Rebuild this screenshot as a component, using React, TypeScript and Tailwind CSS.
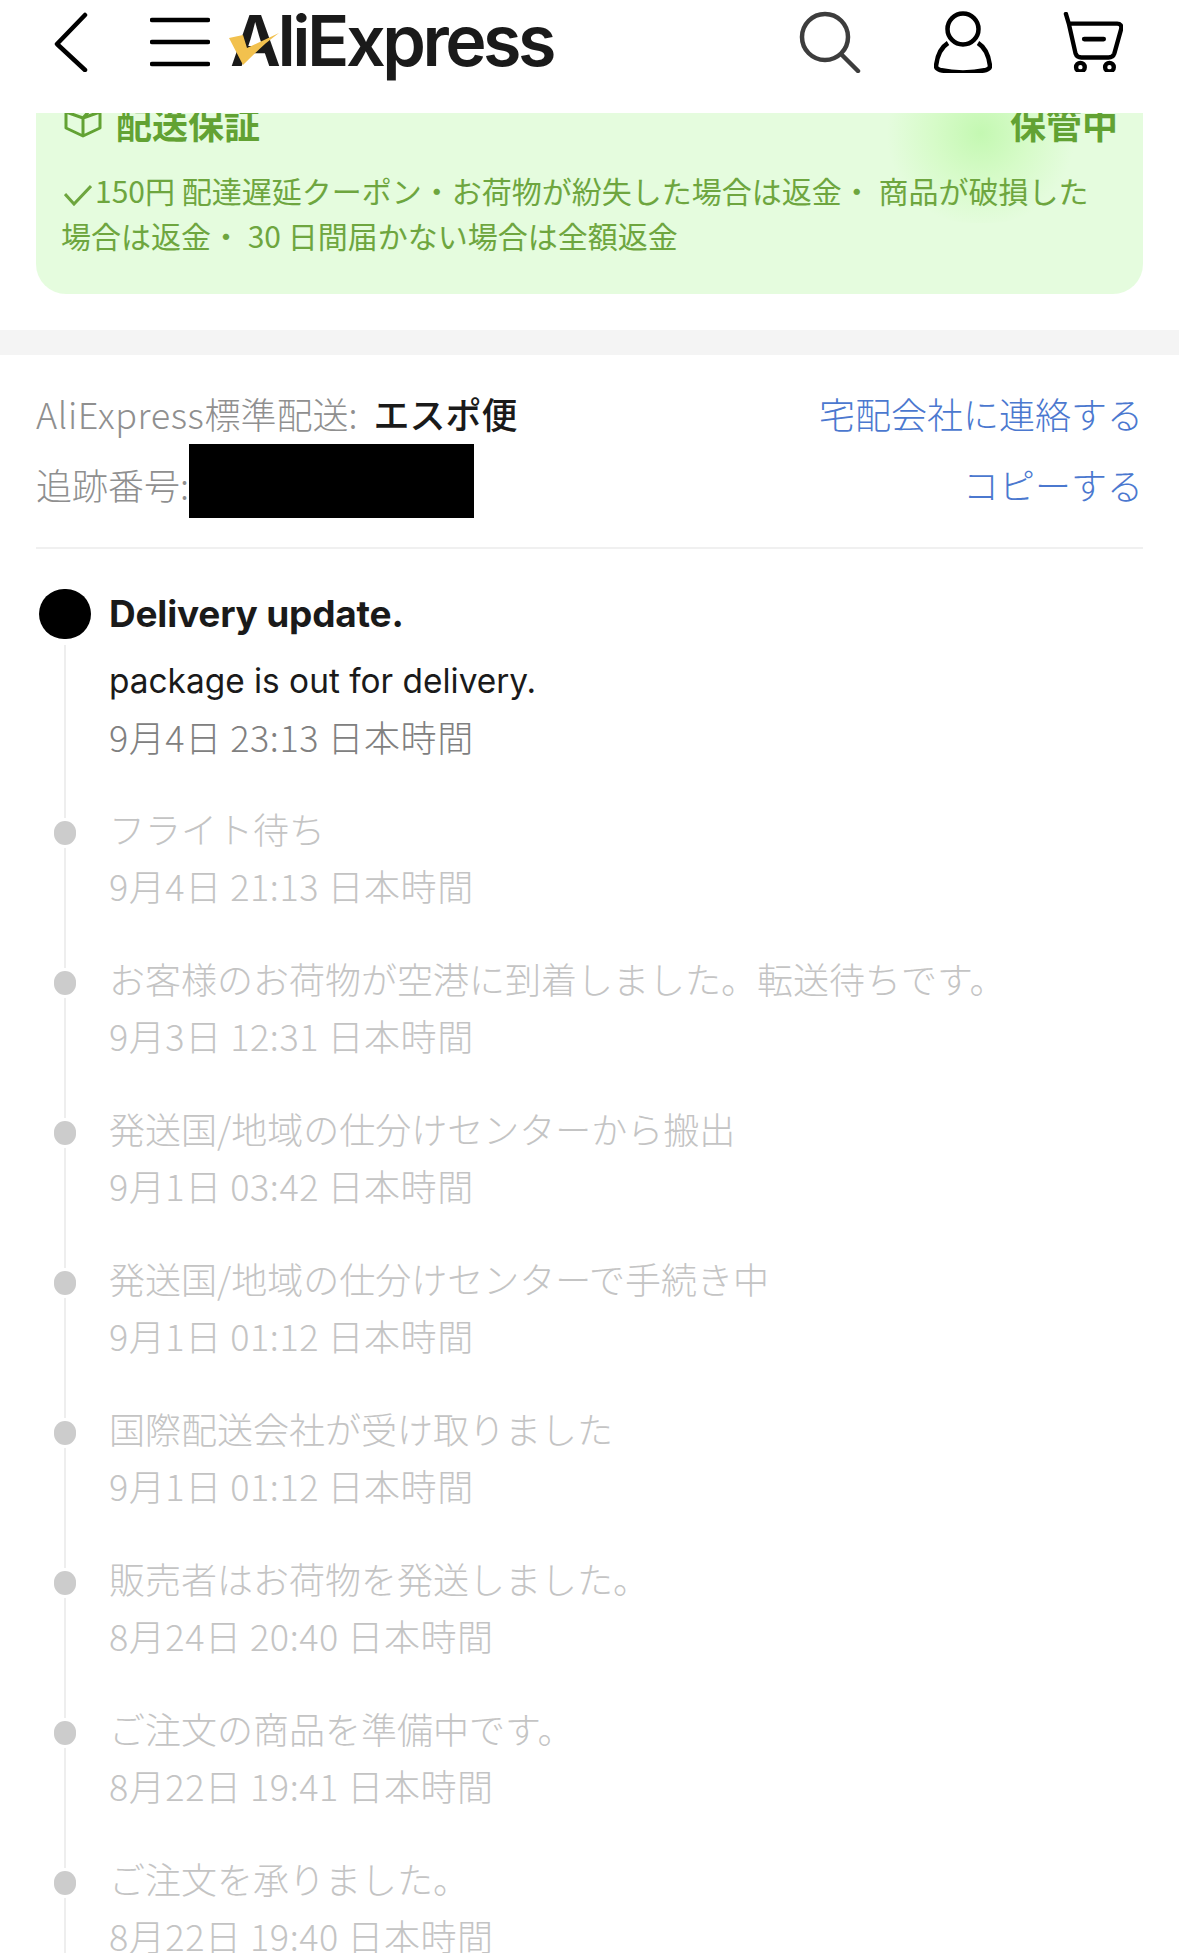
import React from "react";

const FONT = "font-['Noto_Sans_CJK_JP','Noto_Sans',sans-serif]";

const Header: React.FC = () => (
  <header className="relative z-10 h-[113px] bg-white flex items-start">
    <svg className="mt-[12px] ml-[52px] shrink-0" width="38" height="60" viewBox="0 0 38 60" fill="none" stroke="#000" strokeWidth="4.5" strokeLinecap="round" strokeLinejoin="round">
      <path d="M33 3 L5 32 L33 58" />
    </svg>
    <svg className="mt-[17px] ml-[60px] shrink-0" width="60" height="50" viewBox="0 0 60 50" fill="none" stroke="#000" strokeWidth="4.5" strokeLinecap="round">
      <path d="M2 3 H58 M2 25 H58 M2 47 H58" />
    </svg>
    <div className="relative ml-[20px] shrink-0 h-[90px]">
      <span className="block text-[70px] leading-[82px] font-semibold tracking-[-3.5px] text-[#1a1a1a] font-['Inter',sans-serif]">AliExpress</span>
      <svg className="absolute left-[-1px] top-[33px]" width="50" height="34" viewBox="0 0 50 34">
        <path d="M0 5 L14 2 L18 15 L50 0 C36 10 26 20 14 32 Z" fill="#f2c14e" />
      </svg>
    </div>
    <div className="ml-auto flex items-start">
      <svg className="mt-[11px]" width="62" height="62" viewBox="0 0 62 62" fill="none" stroke="#3d3d3d" strokeWidth="4.5" strokeLinecap="round">
        <circle cx="26" cy="26" r="23" />
        <path d="M43 44 L59 60" />
      </svg>
      <svg className="mt-[11px] ml-[73px]" width="58" height="62" viewBox="0 0 58 62" fill="none" stroke="#000" strokeWidth="4.5" strokeLinejoin="round">
        <circle cx="29" cy="18" r="15.5" />
        <path d="M14 32 C6 37 3 46 2 55 C2 57 3 58 6 59 C20 62 38 62 52 59 C55 58 56 57 56 55 C55 46 52 37 44 32" />
      </svg>
      <svg className="mt-[12px] ml-[71px] mr-[56px]" width="60" height="60" viewBox="0 0 62 62" fill="none" stroke="#000" strokeWidth="4.5" strokeLinecap="round" strokeLinejoin="round">
        <path d="M3 2 L6 12 L13 43 C14 46 16 47 19 47 H47 C50 47 52 46 53 43 L60 18 C61 14 59 12 56 12 H6" />
        <path d="M22 28 H42" strokeWidth="5" />
        <circle cx="18" cy="57" r="4.5" />
        <circle cx="48" cy="57" r="4.5" />
      </svg>
    </div>
  </header>
);

const GuaranteeCard: React.FC = () => (
  <div className="relative mx-[36px] mt-[-30px] mb-[36px] h-[211px]">
    <div className="absolute left-[810px] top-[-20px] w-[300px] h-[270px] rounded-full bg-[radial-gradient(circle,#ffffff_0%,#ffffff00_70%)] opacity-50" />
    <div className="relative h-full overflow-hidden rounded-b-[30px] bg-[#e4fcdc]/95 px-[25px] pt-[15px]">
      <div className="absolute left-[845px] top-[-40px] w-[200px] h-[180px] rounded-full bg-[radial-gradient(circle,#c4f8b2_0%,#d6fbc8_35%,#e4fcdc00_70%)]" />
      <div className="relative flex items-center justify-between h-[50px] text-[36px] font-bold text-[#62a233]">
        <div className="flex items-center">
          <svg className="ml-[2px] mr-[13px]" width="40" height="30" viewBox="0 0 38 30" fill="none" stroke="#62a233" strokeWidth="3" strokeLinejoin="round">
            <path d="M2 4 L19 10 L36 4 V20 L19 28 L2 20 Z M19 10 V28 M19 10 L26 2 L32 5" />
          </svg>
          <span>配送保証</span>
        </div>
        <span>保管中</span>
      </div>
      <p className="relative mt-[20px] text-[30px] leading-[44.5px] text-[#6ea63f] whitespace-nowrap">
        <svg className="inline-block mr-[3px] ml-[3px]" width="28" height="22" viewBox="0 0 28 22" fill="none" stroke="#6ea63f" strokeWidth="3">
          <path d="M1 10 L10 20 L27 2" />
        </svg>
        150円 配達遅延クーポン・お荷物が紛失した場合は返金・ 商品が破損した
        <br />
        場合は返金・ 30 日間届かない場合は全額返金
      </p>
    </div>
  </div>
);

const ShippingInfo: React.FC = () => (
  <section className="px-[36px] pt-[29px] text-[36px] font-light">
    <div className="flex items-center justify-between h-[58px] leading-[58px]">
      <div className="text-[#8f8f8f]">
        <span className="tracking-[0.6px]">AliExpress</span>標準配送:
        <span className="ml-[16px] font-medium text-[#1a1a1a]">エスポ便</span>
      </div>
      <span className="text-[#4b78cf]">宅配会社に連絡する</span>
    </div>
    <div className="flex items-center justify-between h-[74px] mt-[2px]">
      <div className="flex items-center text-[#8f8f8f]">
        <span className="mt-[6px]">追跡番号:</span>
        <div className="w-[285px] h-[74px] bg-black" />
      </div>
      <span className="text-[#4b78cf] mt-[5px]">コピーする</span>
    </div>
    <div className="h-[2px] bg-[#f0f0f0] mt-[29px] mb-[40px]" />
  </section>
);

interface TrackingEvent {
  title: string;
  time: string;
}

const events: TrackingEvent[] = [
  { title: "フライト待ち", time: "9月4日 21:13 日本時間" },
  { title: "お客様のお荷物が空港に到着しました。転送待ちです。", time: "9月3日 12:31 日本時間" },
  { title: "発送国/地域の仕分けセンターから搬出", time: "9月1日 03:42 日本時間" },
  { title: "発送国/地域の仕分けセンターで手続き中", time: "9月1日 01:12 日本時間" },
  { title: "国際配送会社が受け取りました", time: "9月1日 01:12 日本時間" },
  { title: "販売者はお荷物を発送しました。", time: "8月24日 20:40 日本時間" },
  { title: "ご注文の商品を準備中です。", time: "8月22日 19:41 日本時間" },
  { title: "ご注文を承りました。", time: "8月22日 19:40 日本時間" },
];

const Timeline: React.FC = () => (
  <section className="px-[36px]">
    <div className="flex h-[212px]">
      <div className="w-[58px] flex flex-col items-center">
        <div className="w-[52px] h-[50px] rounded-full bg-black shrink-0" />
        <div className="w-[2px] flex-1 mt-[6px] bg-[#eeeeee]" />
      </div>
      <div className="ml-[15px] font-['Inter',sans-serif]">
        <div className="h-[50px] leading-[50px] font-bold text-[#1a1a1a] text-[37px] tracking-[-0.2px]">Delivery update.</div>
        <div className="mt-[13px] leading-[58px] text-[#1a1a1a] text-[33.4px]">package is out for delivery.</div>
        <div className={`mt-[-3px] leading-[58px] text-[36px] tracking-[0.55px] font-light text-[#808080] ${FONT}`}>9月4日 23:13 日本時間</div>
      </div>
    </div>
    {events.map((ev, i) => (
      <div key={i} className="flex h-[150px]">
        <div className="w-[58px] flex flex-col items-center">
          <div className="w-[2px] h-[17px] bg-[#eeeeee]" />
          <div className="w-[22px] h-[24px] my-[3px] rounded-full bg-[#cccccc] shrink-0" />
          <div className="w-[2px] flex-1 bg-[#eeeeee]" />
        </div>
        <div className="ml-[15px] mt-[-1px] text-[36px] font-light leading-[57px] text-[#c4c4c4] whitespace-nowrap">
          <div>{ev.title}</div>
          <div className="tracking-[0.55px]">{ev.time}</div>
        </div>
      </div>
    ))}
  </section>
);

export default function App() {
  return (
    <div className={`w-[1179px] h-[1953px] overflow-hidden bg-white ${FONT}`}>
      <Header />
      <GuaranteeCard />
      <div className="h-[25px] bg-[#f4f4f4]" />
      <ShippingInfo />
      <Timeline />
    </div>
  );
}
